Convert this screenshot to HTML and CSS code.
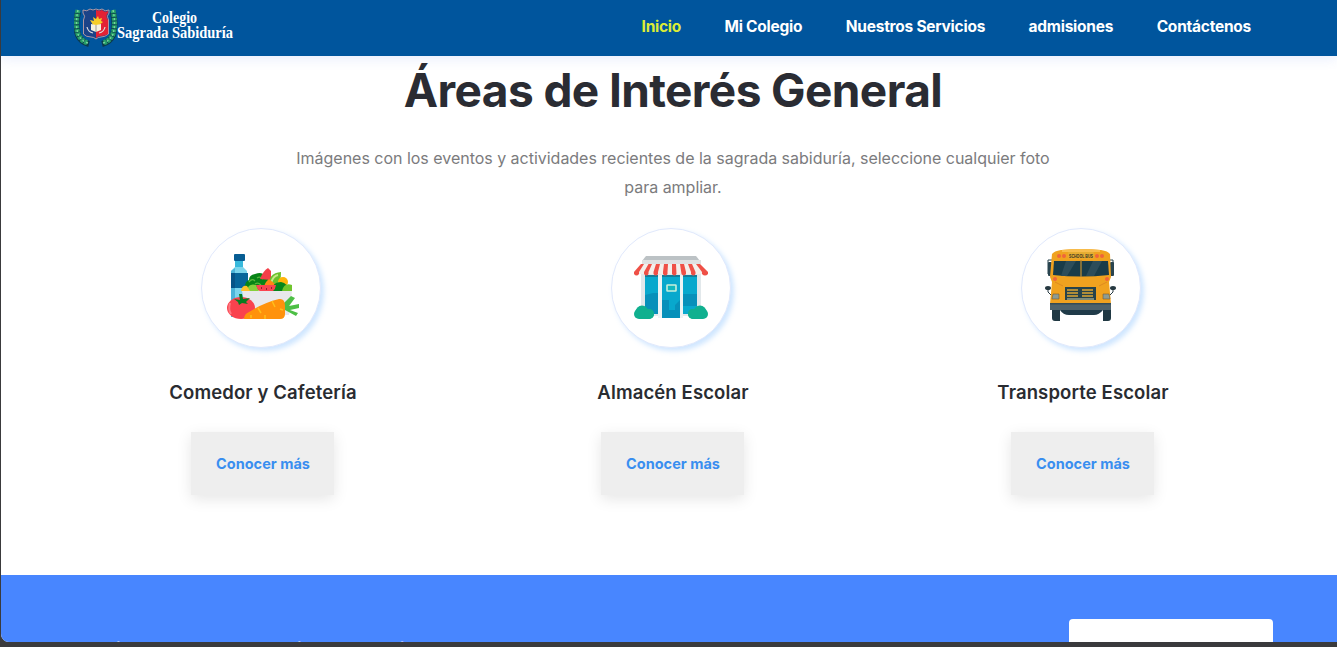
FILE: index.html
```html
<!DOCTYPE html>
<html lang="es">
<head>
<meta charset="utf-8">
<title>Colegio Sagrada Sabiduría</title>
<link rel="stylesheet" href="styles.css">
</head>
<body>
<div class="page">
  <header class="navbar">
    <a class="brand">
      <svg width="162" height="42" viewBox="0 0 162 42">
        <path d="M4 7Q1 20 4 30Q7 37 15 39M39 7Q42 20 39 30Q36 37 28 39" fill="none" stroke="#0b3a4c" stroke-width="6"/>
        <path d="M4 5Q1 19 4 29Q7 36 14 38M39 5Q42 19 39 29Q36 36 29 38" fill="none" stroke="#259d68" stroke-width="5" stroke-dasharray="3 .8"/>
        <path d="M4 5Q1 19 4 29Q7 36 14 38M39 5Q42 19 39 29Q36 36 29 38" fill="none" stroke="#79d69b" stroke-width="1.4" stroke-dasharray="2 2"/>
        <path d="M9 5Q13 7 16 4Q19 6 22 4Q25 6 28 4Q31 7 35 5V8Q32 11 34.500 15V29Q31 32 27 32Q24 32 22 34Q20 32 17 32Q12 32 9.500 29V15Q12 11 9 8Z" fill="#1c4388" stroke="#d8a8a5" stroke-width=".8"/>
        <path d="M22 5Q25 6 28 5Q31 8 34 6V8Q31 11 34 15V29Q31 31 27 31Q24 31 22 33Z" fill="#e32235"/>
        <path d="M16 15l4 1 -1-4 3 2 2-3 1 3 3-1-1 3 2 1-4 3h-6z" fill="#f5ce28"/>
        <path d="M17 19l5 1 5-1v6l-5 2-5-2z" fill="#f6f3df"/><path d="M22 20v7" stroke="#777" stroke-width=".7"/>
        <path d="M13 22q1 5 6 6M31 22q-1 5-6 6" fill="none" stroke="#ddd" stroke-width="1.2"/>
        <g class="brand-text"><text x="78" y="18" textLength="45" lengthAdjust="spacingAndGlyphs">Colegio</text><text x="43" y="33" textLength="116" lengthAdjust="spacingAndGlyphs">Sagrada Sabiduría</text></g>
      </svg>
    </a>
    <nav class="menu">
      <a class="menu-link active">Inicio</a>
      <a class="menu-link">Mi Colegio</a>
      <a class="menu-link">Nuestros Servicios</a>
      <a class="menu-link">admisiones</a>
      <a class="menu-link">Contáctenos</a>
    </nav>
  </header>
  <main class="areas">
    <h1 class="title">Áreas de Interés General</h1>
    <p class="intro">Imágenes con los eventos y actividades recientes de la sagrada sabiduría, seleccione cualquier foto<br>para ampliar.</p>
    <div class="cards">
      <article class="card">
        <div class="circle">
          <svg width="120" height="120" viewBox="0 0 120 120">
            <path d="M34 33h8v6l4 4v46H30V43l4-4z" fill="#7bd5ec"/><path d="M30 43l4-3v49h-4z" fill="#4bb4d8"/><path d="M34 33h8v6h-8z" fill="#38b9dc"/>
            <rect x="33" y="26" width="11" height="7" rx="1" fill="#075d93"/><rect x="30" y="45" width="17" height="15" fill="#07669b"/><path d="M30 45h4v15h-4z" fill="#075487"/>
            <path d="M44 62q-1-8 4-10 0-5 6-6 7-3 10 2 5 0 5 5l6 9z" fill="#078416"/>
            <path d="M48 54q3-4 6-1M56 50q3-2 6 1M54 56q3-2 6 1" stroke="#58b83b" stroke-width="1.3" fill="none"/>
            <path d="M59 51q3-8 8-11l3 3v9z" fill="#f43f49"/><path d="M68 58q-1-13 12-14 1 10-9 15z" fill="#6bc12c"/><path d="M70 55q2-7 7-8" stroke="#c8e887" stroke-width="2" fill="none"/>
            <circle cx="82" cy="54" r="5" fill="#ffb40b"/><path d="M63 60q0-5 5-9l6 5-2 6z" fill="#ff8615"/><path d="M71 63q0-9 9-9 7 1 7 9z" fill="#07851b"/>
            <path d="M46 63q1-8 9-6l3 6z" fill="#87cf3c"/>
            <path d="M55 57h20q-1 8-10 8-8 0-10-8z" fill="#fb4450"/><path d="M60 60h1M65 61h1M70 60h1" stroke="#8e2530" stroke-width="2"/>
            <path d="M81 63q2-9 10-6v6z" fill="#70c52d"/><path d="M40 63q1-6 6-5l3 5z" fill="#ffc22a"/>
            <path d="M41 63h50l-3 24H46z" fill="#e8e8ec"/>
            <ellipse cx="40" cy="80" rx="14" ry="11" fill="#f9424e"/><path d="M29 75q-2 7 1 11" stroke="#ff7880" stroke-width="2" fill="none"/>
            <path d="M33 71l6 1-1-6h3l1 5 7-1-4 4 2 2-6-1-3 2-1-3z" fill="#087c20"/>
            <path d="M82 76l8-8 4 2-6 8 10-2v4l-9 2 8 3-2 3-11-6z" fill="#4dbf45"/>
            <path d="M43 91q0-5 5-7 14-9 30-13 6-1 6 7v8q0 5-5 5z" fill="#ff920c"/><path d="M57 80l3 5M71 73l3 6M64 87v4M79 81l3 1M50 87v3" stroke="#ffbe1b" stroke-width="1.5"/>
          </svg>
        </div>
        <h2 class="card-title">Comedor y Cafetería</h2><a class="button">Conocer más</a>
      </article>
      <article class="card">
        <div class="circle">
          <svg width="120" height="120" viewBox="0 0 120 120">
            <path d="M30 45h60v43H30z" fill="#e2e8eb"/><path d="M35 28h50l4 5H31z" fill="#bcc2c5"/><path d="M31 32h59v4H31z" fill="#dfe1e2"/>
            <path d="M34 47h13v39H34zM51 47h18v43H51zM72 47h14v39H72z" fill="#08a8cd"/>
            <path d="M34 67l8-2h5v21H34zM51 72h7v10h6v8H51zM72 66h14v12H72zM64 77l5-5v18h-5z" fill="#0790ba"/>
            <path d="M34 47h13v2H34zM51 47h18v2H51zM72 47h14v2H72z" fill="#137d9a"/><path d="M47 47h4v43h-4zM69 47h3v43h-3z" fill="#eef4f5"/>
            <rect x="56" y="57" width="9" height="6" rx=".5" fill="#12b8bd" stroke="#c7eedb" stroke-width="1.6"/>
            <path d="M30 36h59l8 8v2q-3 2-6 0H28q-3 2-5 0v-2z" fill="#f4efeb"/>
            <path d="M30 36h3l-5 8v2q-2.500 3-5 0v-2zM37.500 36h3.500l-3.500 8v2q-2 3-4.500 0v-2zM45 36h4l-2 8v2q-2 3-4.500 0v-2zM53 36h4l-.5 8v2q-2 3-4.500 0v-2zM61 36h4l.5 10q-2 3-4.500 0zM69 36h4l2 8v2q-2 3-4.500 0zM77 36h4l3.500 8v2q-2 3-4.500 0v-2zM85 36h4l8 8v2q-3 3-6 0v-2z" fill="#ef5047"/>
            <g fill="#10b08f"><circle cx="31" cy="84" r="6.500"/><rect x="23" y="81" width="20" height="10" rx="5"/><circle cx="38" cy="86" r="5"/><circle cx="89" cy="84" r="6.500"/><rect x="77" y="81" width="20" height="10" rx="5"/><circle cx="82" cy="86" r="5"/></g>
          </svg>
        </div>
        <h2 class="card-title">Almacén Escolar</h2><a class="button">Conocer más</a>
      </article>
      <article class="card">
        <div class="circle">
          <svg width="120" height="120" viewBox="0 0 120 120">
            <path d="M31 32h-4v14h4M89 32h3v14h-4" fill="none" stroke="#27434d" stroke-width="1"/>
            <rect x="27" y="34" width="4" height="14" rx="1" fill="#28444f"/><rect x="89" y="34" width="4" height="14" rx="1" fill="#28444f"/>
            <path d="M31 26q2-3 9-4 20-2 40 0 7 1 9 4l1 23-2 5 2 22H29l2-22-2-5z" fill="#f0a21f"/><path d="M41 22q19-2 38 0v2H41z" fill="#f8bd4c"/>
            <path d="M33 33h54l1 14q-28 3-56 0z" fill="#193c49"/><path d="M45 33h10l-9 15h-6zM72 33h9l-8 15h-8z" fill="#2c4d5a"/><path d="M60 32v17" stroke="#b98b34" stroke-width="1.3"/>
            <rect x="47" y="24" width="26" height="6.500" rx="1" fill="#e6ad32"/><text class="bus-label" x="48" y="29.500" textLength="24" lengthAdjust="spacingAndGlyphs">SCHOOL BUS</text>
            <g fill="#ef653b"><circle cx="38" cy="28" r="2"/><circle cx="43" cy="28" r="2"/><circle cx="76" cy="28" r="2"/><circle cx="81" cy="28" r="2"/><circle cx="34" cy="51" r="2"/><circle cx="86" cy="51" r="2"/></g>
            <path d="M34 54l8 4M86 54l-8 4" stroke="#df8a20" stroke-width="1"/>
            <path d="M44 59h31v13H44z" fill="#27434b"/><path d="M46 62h11M61 62h11M46 65h11M61 65h11M46 68h11M61 68h11" stroke="#dda635" stroke-width="1.4"/><path d="M46 71h27" stroke="#d7d5aa"/>
            <path d="M32 66h6v5h-7zM82 66h6l1 5h-7z" fill="#8e9c92" stroke="#735c37" stroke-width=".6"/>
            <ellipse cx="27" cy="60" rx="3" ry="2" fill="#263941"/><ellipse cx="92" cy="60" rx="3" ry="2" fill="#263941"/><path d="M27 61v3l3 3M92 61v3l-3 3" fill="none" stroke="#263941"/>
            <path d="M31 81h8v12h-5q-3 0-3-3zM82 81h8v9q0 3-3 3h-5z" fill="#203843"/><path d="M39 82h43q-4 5-9 5H48q-6 0-9-5z" fill="#203b49"/>
            <path d="M29 75h61v7H29z" fill="#4d626b"/><path d="M29 75h61v1.500H29z" fill="#354c56"/>
          </svg>
        </div>
        <h2 class="card-title">Transporte Escolar</h2><a class="button">Conocer más</a>
      </article>
    </div>
  </main>
  <section class="contact">
    <h2 class="contact-title">Quieres tener mas información</h2>
    <div class="contact-button"></div>
  </section>
</div>
</body>
</html>
```
FILE: styles.css
```css
* { box-sizing: border-box; }
body { margin: 0; background: #3a3a3c; font-family: Inter, "Liberation Sans", sans-serif; height: 647px; overflow: hidden; }
.page { margin-left: 1px; height: 642px; overflow: hidden; background: #fff; border-bottom-left-radius: 8px; display: flex; flex-direction: column; }
.navbar { flex: none; height: 56px; background: #00559d; display: flex; justify-content: space-between; padding: 0 86px 0 73px; box-shadow: 0 2px 12px rgba(70, 110, 240, .14); }
.brand { display: block; padding-top: 5px; }
.brand svg { display: block; }
.brand-text { fill: #fff; font: bold 17px "Liberation Serif", serif; }
.menu { display: flex; gap: 43.5px; align-items: center; padding-bottom: 3px; }
.menu-link { color: #fff; font-size: 15.5px; font-weight: 700; letter-spacing: -.25px; white-space: nowrap; }
.active { color: #dcec36; }
.areas { flex: none; height: 519px; padding: 6px 0 0 57px; width: 1287px; text-align: center; }
.title { margin: 0; font-size: 46px; line-height: 57px; letter-spacing: -.6px; font-weight: 700; color: #2a2c33; }
.intro { margin: 25px 0 0; font-size: 16px; line-height: 29px; letter-spacing: -.02px; color: #7b7b7d; }
.cards { display: grid; grid-template-columns: repeat(3, 410px); margin-top: 26px; }
.card { display: flex; flex-direction: column; align-items: center; }
.circle { width: 120px; height: 120px; margin-right: 4px; border-radius: 50%; background: #fff; border: 1px solid #e1e9fc; box-shadow: 3px 3px 5px rgba(130, 188, 255, .38); }
.circle svg { display: block; margin: -1px; }
.card-title { margin: 30px 0 0; font-size: 18.5px; line-height: 29px; letter-spacing: .12px; font-weight: 600; color: #292c31; }
.button { display: flex; align-items: center; justify-content: center; width: 143px; height: 63px; margin: 25px 1px 0 0; padding-left: 1px; background: #eee; color: #398ef0; font-size: 14.5px; font-weight: 700; letter-spacing: .02px; box-shadow: 0 4px 14px rgba(0, 0, 0, .1); }
.bus-label { font: bold 6px "Liberation Sans", sans-serif; fill: #353022; }
.contact { flex: none; height: 110px; background: #4886ff; display: flex; justify-content: space-between; padding: 44px 64px 0 81px; }
.contact-title { margin: 13px 0 0; color: #fff; font-size: 24px; line-height: 40px; letter-spacing: -.3px; }
.contact-button { width: 204px; height: 60px; border-radius: 4px; background: #fff; }
```
